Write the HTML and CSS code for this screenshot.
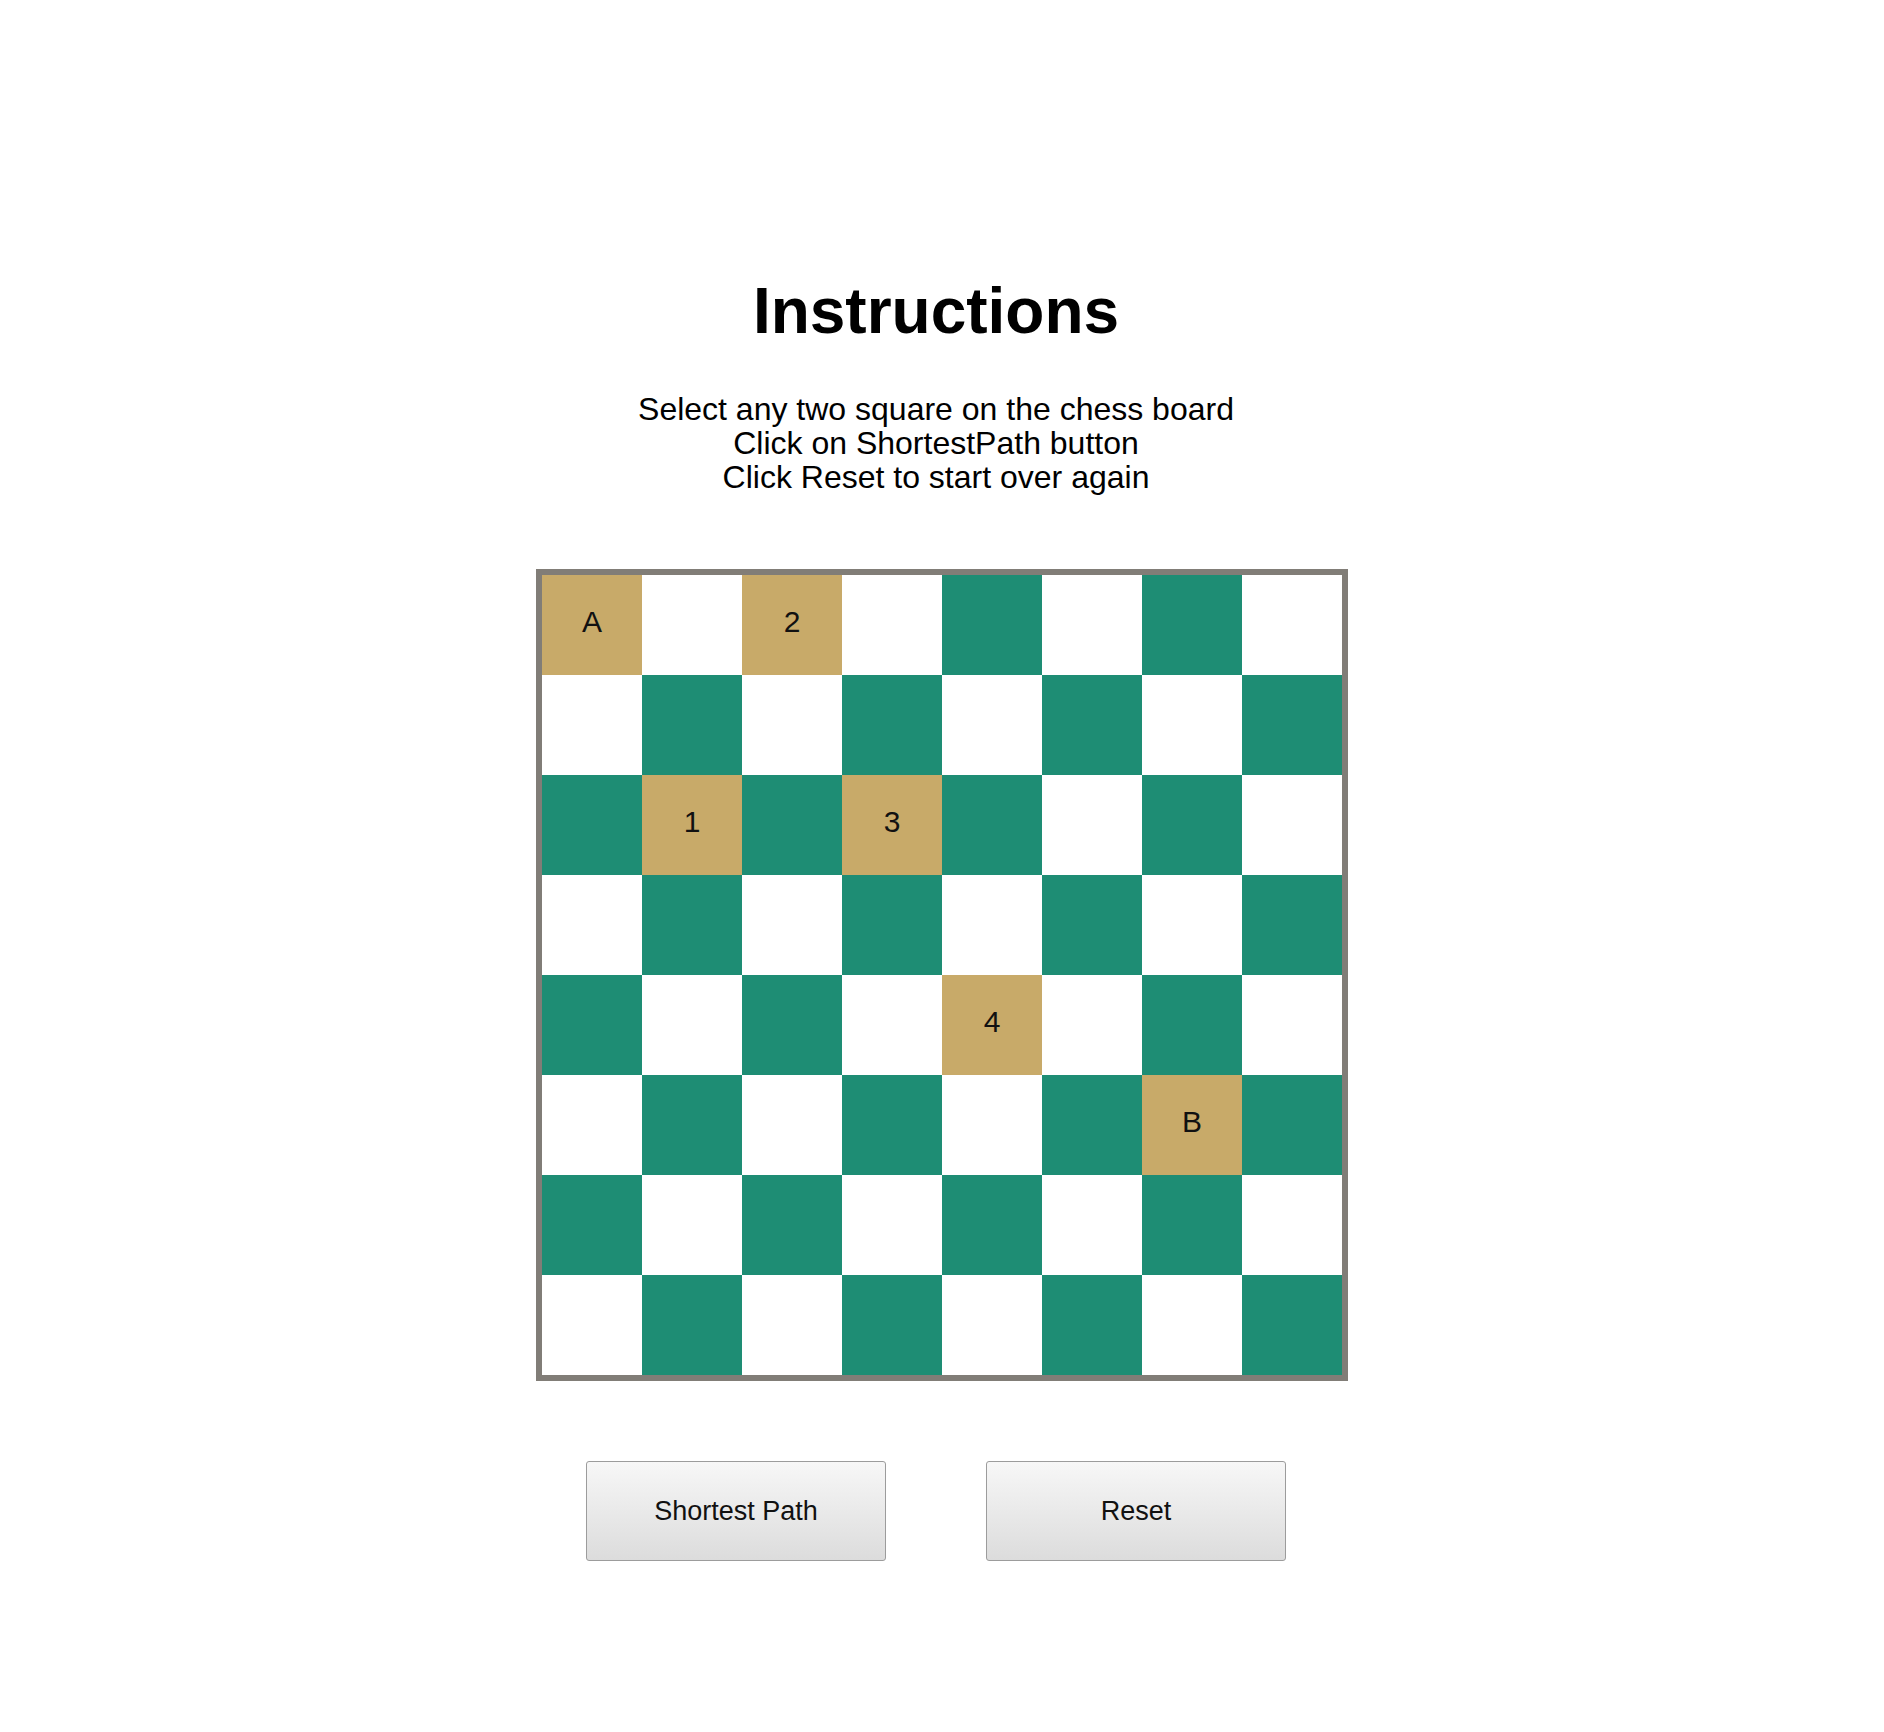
FILE: index.html
```html
<!DOCTYPE html>
<html lang="en">
<head>
<meta charset="utf-8">
<title>Knight Shortest Path</title>
<link rel="stylesheet" href="styles.css">
</head>
<body>
<main class="page">
  <header class="intro">
    <h1 class="title">Instructions</h1>
    <p class="steps">Select any two square on the chess board<br>Click on ShortestPath button<br>Click Reset to start over again</p>
  </header>
  <div class="board">
    <div class="cell gold">A</div><div class="cell light"></div><div class="cell gold">2</div><div class="cell light"></div><div class="cell dark"></div><div class="cell light"></div><div class="cell dark"></div><div class="cell light"></div>
    <div class="cell light"></div><div class="cell dark"></div><div class="cell light"></div><div class="cell dark"></div><div class="cell light"></div><div class="cell dark"></div><div class="cell light"></div><div class="cell dark"></div>
    <div class="cell dark"></div><div class="cell gold">1</div><div class="cell dark"></div><div class="cell gold">3</div><div class="cell dark"></div><div class="cell light"></div><div class="cell dark"></div><div class="cell light"></div>
    <div class="cell light"></div><div class="cell dark"></div><div class="cell light"></div><div class="cell dark"></div><div class="cell light"></div><div class="cell dark"></div><div class="cell light"></div><div class="cell dark"></div>
    <div class="cell dark"></div><div class="cell light"></div><div class="cell dark"></div><div class="cell light"></div><div class="cell gold">4</div><div class="cell light"></div><div class="cell dark"></div><div class="cell light"></div>
    <div class="cell light"></div><div class="cell dark"></div><div class="cell light"></div><div class="cell dark"></div><div class="cell light"></div><div class="cell dark"></div><div class="cell gold">B</div><div class="cell dark"></div>
    <div class="cell dark"></div><div class="cell light"></div><div class="cell dark"></div><div class="cell light"></div><div class="cell dark"></div><div class="cell light"></div><div class="cell dark"></div><div class="cell light"></div>
    <div class="cell light"></div><div class="cell dark"></div><div class="cell light"></div><div class="cell dark"></div><div class="cell light"></div><div class="cell dark"></div><div class="cell light"></div><div class="cell dark"></div>
  </div>
  <div class="actions">
    <button class="btn" type="button">Shortest Path</button>
    <button class="btn" type="button">Reset</button>
  </div>
</main>
</body>
</html>
```
FILE: styles.css
```css
* { box-sizing: border-box; }

html, body {
  margin: 0;
  padding: 0;
  background: #ffffff;
}

body {
  font-family: "Liberation Sans", Arial, sans-serif;
  color: #000000;
}

.page {
  display: flex;
  flex-direction: column;
  align-items: center;
  padding-top: 274px;
  padding-bottom: 100px;
}

.intro {
  align-self: stretch;
  margin-right: 12px;
  text-align: center;
}

.title {
  margin: 0;
  font-size: 64px;
  font-weight: 700;
  line-height: normal;
}

.steps {
  margin: 44px 0 0;
  font-size: 32px;
  line-height: 34px;
}

.board {
  margin-top: 75px;
  display: grid;
  grid-template-columns: repeat(8, 100px);
  grid-template-rows: repeat(8, 100px);
  border: 6px solid #817d77;
}

.cell {
  display: flex;
  align-items: center;
  justify-content: center;
  padding-bottom: 6px;
  font-size: 30px;
  color: #111111;
}

.light { background: #ffffff; }
.dark { background: #1e8d74; }
.gold { background: #c8aa69; }

.actions {
  align-self: stretch;
  margin-top: 80px;
  margin-right: 12px;
  display: flex;
  justify-content: center;
  gap: 100px;
}

.btn {
  width: 300px;
  height: 100px;
  border: 1px solid #9c9c9c;
  border-radius: 3px;
  background: linear-gradient(#f7f7f7, #dcdcdc);
  font-family: "Liberation Sans", Arial, sans-serif;
  font-size: 27px;
  color: #111111;
  padding: 0;
}
```
